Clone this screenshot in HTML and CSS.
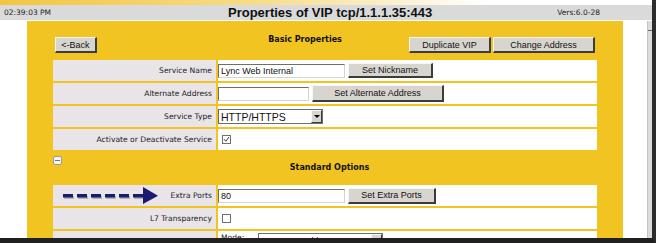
FILE: index.html
```html
<!DOCTYPE html>
<html lang="en">
<head>
    <meta charset="UTF-8">
    <title>Properties of VIP</title>
    <link rel="stylesheet" href="styles.css">
</head>
<body>
    <div class="screen">
        <div class="glow"></div>
        <div class="header">
            <span class="clock">02:39:03 PM</span>
            <span class="title">Properties of VIP tcp/1.1.1.35:443</span>
            <span class="version">Vers:6.0-28</span>
        </div>
        <div class="main">
            <div class="gutter"></div>
            <div class="panel">
                <div class="toolbar">
                    <button type="button" class="btn btn-back">&lt;-Back</button>
                    <div class="section-title basic">Basic Properties</div>
                    <button type="button" class="btn btn-dup">Duplicate VIP</button>
                    <button type="button" class="btn btn-change">Change Address</button>
                </div>

                <div class="props">
                    <div class="label">Service Name</div>
                    <div class="value">
                        <input type="text" class="field w-name" value="Lync Web Internal">
                        <button type="button" class="btn btn-nick">Set Nickname</button>
                    </div>

                    <div class="label">Alternate Address</div>
                    <div class="value">
                        <input type="text" class="field w-alt" value="">
                        <button type="button" class="btn btn-alt">Set Alternate Address</button>
                    </div>

                    <div class="label">Service Type</div>
                    <div class="value">
                        <div class="select w-type">
                            <span class="select-text">HTTP/HTTPS</span>
                            <span class="select-arrow"></span>
                        </div>
                    </div>

                    <div class="label">Activate or Deactivate Service</div>
                    <div class="value">
                        <span class="check">
                            <svg width="7" height="7" viewBox="0 0 7 7"><path d="M1 3.2 L2.8 5.3 L6 1" fill="none" stroke="#3a3a5a" stroke-width="1"/></svg>
                        </span>
                    </div>
                </div>

                <div class="section-head">
                    <span class="toggle"></span>
                    <div class="section-title">Standard Options</div>
                </div>

                <div class="props">
                    <div class="label has-arrow">
                        <!-- annotation arrow drawn over the screenshot -->
                        <svg class="arrow" width="100" height="18" viewBox="0 0 100 18">
                            <g fill="#8a8a8a" opacity="0.55">
                                <rect x="1" y="9" width="10" height="3"/>
                                <rect x="15" y="9" width="10" height="3"/>
                                <rect x="29" y="9" width="10" height="3"/>
                                <rect x="43" y="9" width="10" height="3"/>
                                <rect x="57" y="9" width="10" height="3"/>
                                <rect x="71" y="9" width="12" height="3"/>
                            </g>
                            <g fill="#1a1a72">
                                <rect x="0" y="7" width="10" height="3.5"/>
                                <rect x="14" y="7" width="10" height="3.5"/>
                                <rect x="28" y="7" width="10" height="3.5"/>
                                <rect x="42" y="7" width="10" height="3.5"/>
                                <rect x="56" y="7" width="10" height="3.5"/>
                                <rect x="70" y="7" width="12" height="3.5"/>
                                <path d="M80 0 L95 8.7 L80 17 Z"/>
                            </g>
                        </svg>
                        Extra Ports
                    </div>
                    <div class="value">
                        <input type="text" class="field w-ports" value="80">
                        <button type="button" class="btn btn-ports">Set Extra Ports</button>
                    </div>

                    <div class="label">L7 Transparency</div>
                    <div class="value">
                        <span class="check"></span>
                    </div>

                    <div class="label"></div>
                    <div class="value tall">
                        <span class="mode">Mode:</span>
                        <div class="select w-mode">
                            <span class="select-text">Source IP Address</span>
                            <span class="select-arrow"></span>
                        </div>
                    </div>
                </div>
            </div>
            <div class="margin"></div>
            <div class="scrollbar"><span class="scroll-up"></span></div>
        </div>
    </div>
</body>
</html>
```

FILE: styles.css
```css
body {
    margin: 0;
    padding: 0;
    background-color: #fff;
    font-family: "DejaVu Sans", Verdana, sans-serif;
}
.screen {
    width: 652px;
    height: 238px;
    overflow: hidden;
    border-right: 4px solid #2c2c2c;
    border-bottom: 5px solid #202020;
    background-color: #fff;
    display: flex;
    flex-direction: column;
}
.glow {
    height: 5px;
    flex-shrink: 0;
    background: linear-gradient(to right, #f2c640 0%, #f7dc8a 40%, #fff 75%);
}
.header {
    height: 15px;
    flex-shrink: 0;
    display: flex;
    align-items: center;
    background-color: #dadada;
}
.clock {
    width: 224px;
    padding-left: 4px;
    font-size: 7.5px;
    color: #222;
}
.title {
    font-family: "Liberation Sans", Arial, sans-serif;
    font-weight: bold;
    font-size: 13px;
    color: #111;
}
.version {
    margin-left: auto;
    margin-right: 52px;
    font-size: 7.5px;
    color: #222;
}
.main {
    flex: 1;
    display: flex;
    margin-top: 1px;
    min-height: 0;
}
.gutter {
    width: 27px;
    flex-shrink: 0;
}
.panel {
    width: 544px;
    flex-shrink: 0;
    padding: 13px 26px 0 26px;
    background-color: #f1c421;
}
.margin {
    width: 24px;
    flex-shrink: 0;
}
.scrollbar {
    width: 4px;
    flex-shrink: 0;
    background-color: #dcdcdc;
    border-left: 1px solid #c4c4c4;
    position: relative;
}
.scroll-up {
    position: absolute;
    top: 9px;
    left: 0;
    width: 4px;
    height: 1px;
    background-color: #666;
}

/* toolbar */
.toolbar {
    height: 19px;
    display: flex;
    align-items: flex-end;
}
.section-title {
    font-weight: bold;
    font-size: 8px;
    line-height: 12px;
    color: #111;
    text-align: center;
}
.basic {
    flex: 1;
    align-self: flex-start;
    padding-left: 104px;
}
.btn {
    box-sizing: border-box;
    height: 16px;
    padding: 0;
    font-family: "Liberation Sans", Arial, sans-serif;
    font-size: 9px;
    color: #111;
    background-color: #d8d5d0;
    border-style: solid;
    border-width: 1px 2px 2px 1px;
    border-color: #f6f6f6 #3c3c3c #3c3c3c #f6f6f6;
}
.btn-back {
    width: 42px;
    margin-left: 2px;
}
.btn-dup {
    width: 82px;
}
.btn-change {
    width: 102px;
    margin-left: 2px;
    margin-right: 2px;
}
.btn-nick {
    width: 85px;
    height: 15px;
}
.btn-alt {
    width: 132px;
    height: 17px;
}
.btn-ports {
    width: 88px;
}

/* property tables */
.props {
    margin-top: 7px;
    display: grid;
    grid-template-columns: 163px 379px;
    grid-auto-rows: 21px;
    column-gap: 2px;
    row-gap: 2px;
}
.label {
    display: flex;
    align-items: center;
    justify-content: flex-end;
    padding-right: 4px;
    font-size: 7.6px;
    color: #222;
    background-color: #e8e4e8;
}
.value {
    display: flex;
    align-items: center;
    gap: 3px;
    background-color: #fff;
}
.tall {
    align-items: flex-start;
    padding-top: 2px;
}
.has-arrow {
    position: relative;
}
.arrow {
    position: absolute;
    left: 10px;
    top: 2px;
}
.field {
    box-sizing: border-box;
    height: 14px;
    margin: 0;
    padding: 0 2px;
    font-family: "Liberation Sans", Arial, sans-serif;
    font-size: 9px;
    color: #111;
    background-color: #fff;
    border-style: solid;
    border-width: 1px;
    border-color: #6e6e6e #d4d4d4 #d4d4d4 #6e6e6e;
    outline: none;
}
.w-name {
    width: 127px;
}
.w-alt {
    width: 91px;
}
.w-ports {
    width: 127px;
}
.select {
    box-sizing: border-box;
    height: 15px;
    display: flex;
    align-items: center;
    justify-content: space-between;
    border: 1px solid #6e6e6e;
    background-color: #fff;
}
.select-text {
    padding-left: 2px;
    font-family: "Liberation Sans", Arial, sans-serif;
    font-size: 10.5px;
    color: #111;
}
.select-arrow {
    box-sizing: border-box;
    width: 11px;
    height: 13px;
    display: flex;
    align-items: center;
    justify-content: center;
    background-color: #d8d5d0;
    border-style: solid;
    border-width: 1px;
    border-color: #f6f6f6 #3c3c3c #3c3c3c #f6f6f6;
}
.select-arrow::after {
    content: "";
    border-left: 3px solid transparent;
    border-right: 3px solid transparent;
    border-top: 3px solid #000;
}
.w-type {
    width: 105px;
}
.w-mode {
    width: 125px;
    margin-left: 11px;
}
.w-mode .select-text {
    font-size: 9px;
}
.mode {
    padding-left: 3px;
    font-size: 7.6px;
    color: #222;
}
.check {
    box-sizing: border-box;
    width: 9px;
    height: 9px;
    margin-left: 4px;
    display: flex;
    align-items: center;
    justify-content: center;
    border: 1px solid #707070;
    background-color: #fff;
}

/* collapsible section */
.section-head {
    height: 35px;
    display: flex;
    align-items: flex-start;
}
.section-head + .props {
    margin-top: 0;
}
.toggle {
    box-sizing: border-box;
    width: 9px;
    height: 9px;
    margin-top: 6px;
    display: flex;
    align-items: center;
    justify-content: center;
    border: 1px solid #9a9a9a;
    border-radius: 2px;
    background-color: #f4f4f4;
}
.toggle::after {
    content: "";
    width: 5px;
    height: 1px;
    background-color: #777;
}
.section-head .section-title {
    flex: 1;
    padding-top: 12px;
}
```
